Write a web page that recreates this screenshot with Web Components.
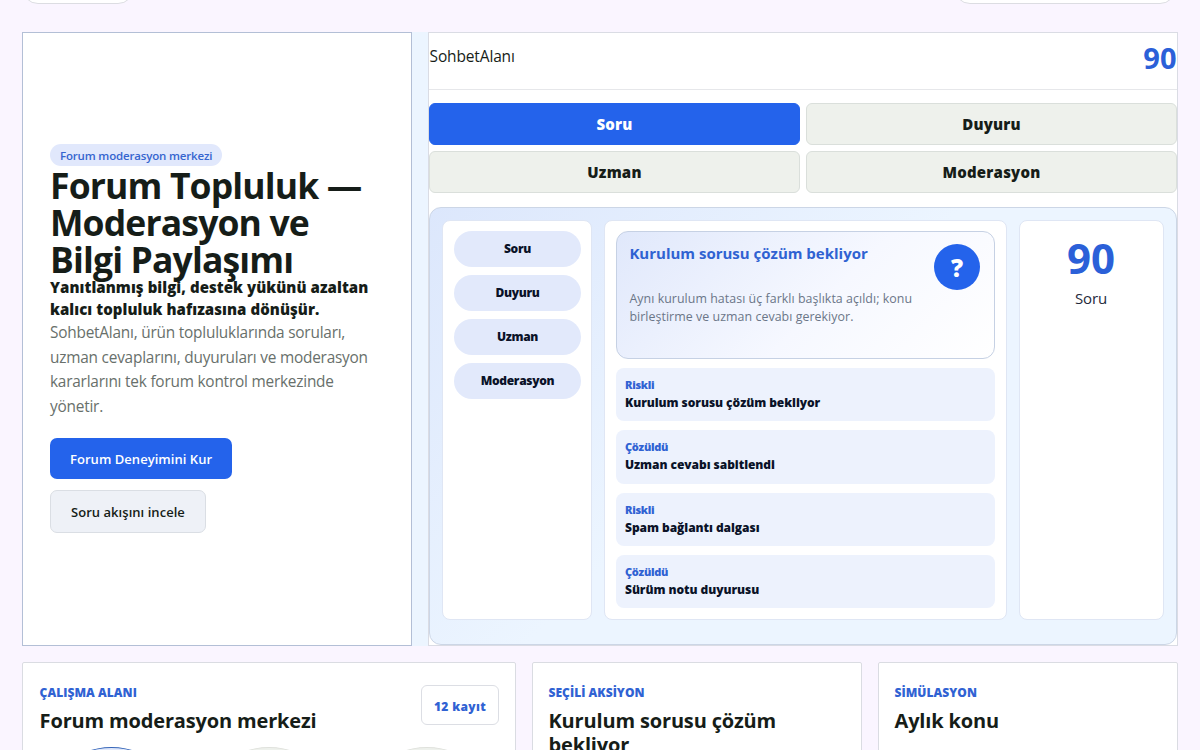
<!DOCTYPE html>
<html lang="tr">
<head>
<meta charset="utf-8">
<title>SohbetAlanı</title>
<style>
  body {
    margin: 0;
    height: 750px;
    overflow: hidden;
    background: #faf5ff;
    color: #161d18;
    font-family: "Open Sans", "Noto Sans", sans-serif;
    font-size: 15px;
  }
</style>
</head>
<body>
<forum-page></forum-page>

<script>
class ForumTop extends HTMLElement {
  constructor() {
    super();
    this.attachShadow({ mode: 'open' });
    this.shadowRoot.innerHTML = `
      <style>
        :host {
          display: flex;
          justify-content: space-between;
          height: 4px;
          padding: 0 24px 0 22px;
          overflow: hidden;
          align-items: flex-end;
        }
        div {
          flex: none;
          box-sizing: border-box;
          height: 42px;
          border: 1px solid #dcdde2;
          border-radius: 16px;
          background: #fff;
        }
        .marka { width: 112px; }
        .menu { width: 222px; }
      </style>
      <div class="marka"></div>
      <div class="menu"></div>
    `;
  }
}
customElements.define('forum-top', ForumTop);

class ForumIntro extends HTMLElement {
  constructor() {
    super();
    this.attachShadow({ mode: 'open' });
    this.shadowRoot.innerHTML = `
      <style>
        :host {
          box-sizing: border-box;
          display: flex;
          flex-direction: column;
          align-items: flex-start;
          justify-content: center;
          padding: 0 27px 1px;
          border: 1px solid #b3bfd6;
          background: #fff;
        }
        .etiket {
          height: 22px;
          padding: 0 10px;
          border-radius: 11px;
          background: #e1e8fc;
          color: #3565cf;
          font-size: 11.5px;
          font-weight: 600;
          line-height: 23px;
          letter-spacing: -0.17px;
          white-space: nowrap;
        }
        h1 {
          margin: 0;
          font-size: 35.5px;
          line-height: 37px;
          letter-spacing: -0.85px;
          white-space: nowrap;
          position: relative;
          top: 1px;
        }
        strong {
          font-weight: 800;
          line-height: 22px;
          letter-spacing: 0.06px;
          white-space: nowrap;
          position: relative;
          top: -1px;
        }
        p {
          margin: 0 0 18.6px;
          color: #68706b;
          font-size: 15.4px;
          line-height: 24.6px;
          letter-spacing: -0.22px;
          white-space: nowrap;
        }
        .btn {
          box-sizing: border-box;
          border-radius: 7px;
          font-size: 13px;
          font-weight: 600;
          letter-spacing: 0.04px;
          white-space: nowrap;
        }
        .ana {
          height: 41px;
          margin-bottom: 11px;
          padding: 0 20px;
          background: #2463eb;
          color: #fff;
          line-height: 42px;
        }
        .ikinci {
          height: 43px;
          padding: 0 20px;
          border: 1px solid #dadee4;
          background: #eef1f7;
          line-height: 42px;
        }
      </style>
      <span class="etiket">Forum moderasyon merkezi</span>
      <h1>Forum Topluluk —<br>Moderasyon ve<br>Bilgi Paylaşımı</h1>
      <strong>Yanıtlanmış bilgi, destek yükünü azaltan<br>kalıcı topluluk hafızasına dönüşür.</strong>
      <p>SohbetAlanı, ürün topluluklarında soruları,<br>uzman cevaplarını, duyuruları ve moderasyon<br>kararlarını tek forum kontrol merkezinde<br>yönetir.</p>
      <div class="btn ana">Forum Deneyimini Kur</div>
      <div class="btn ikinci">Soru akışını incele</div>
    `;
  }
}
customElements.define('forum-intro', ForumIntro);

class ForumTab extends HTMLElement {
  constructor() {
    super();
    this.attachShadow({ mode: 'open' });
    this.shadowRoot.innerHTML = `
      <style>
        :host {
          box-sizing: border-box;
          display: block;
          height: 42px;
          border: 1px solid #dadfdb;
          border-radius: 6px;
          background: #eef1ec;
          font-size: 15px;
          font-weight: 800;
          line-height: 40px;
          letter-spacing: 0.2px;
          text-align: center;
        }
        :host([aktif]) {
          border-color: #2463eb;
          background: #2463eb;
          color: #fff;
        }
      </style>
      <slot></slot>
    `;
  }
}
customElements.define('forum-tab', ForumTab);

class ForumTopic extends HTMLElement {
  constructor() {
    super();
    this.attachShadow({ mode: 'open' });
    this.shadowRoot.innerHTML = `
      <style>
        :host {
          box-sizing: border-box;
          display: block;
          height: 53.3px;
          padding: 8px 9px 0;
          border-radius: 8px;
          background: #edf2fd;
          color: #0a1228;
          font-size: 12px;
          font-weight: 800;
          line-height: 18px;
          letter-spacing: -0.05px;
        }
        b {
          display: block;
          color: #3062d3;
          font-size: 11px;
          font-weight: 800;
          letter-spacing: -0.28px;
        }
      </style>
      <b>${this.getAttribute('durum')}</b>
      <slot></slot>
    `;
  }
}
customElements.define('forum-topic', ForumTopic);

class ForumFeature extends HTMLElement {
  constructor() {
    super();
    this.attachShadow({ mode: 'open' });
    this.shadowRoot.innerHTML = `
      <style>
        :host {
          box-sizing: border-box;
          display: flex;
          justify-content: space-between;
          height: 128px;
          padding: 12px 14px 0 12.4px;
          border: 1px solid #c6d1e4;
          border-radius: 12px;
          background: linear-gradient(135deg, #e0e8fb, #f6f8ff 55%, #fff);
        }
        h3 {
          margin: -1px 0 27px;
          color: #2f62d2;
          font-size: 15px;
          line-height: 20px;
        }
        p {
          margin: 0;
          color: #6b7688;
          font-size: 12.4px;
          line-height: 18px;
          letter-spacing: 0.05px;
          white-space: nowrap;
        }
        .rozet {
          width: 46px;
          height: 46px;
          border-radius: 50%;
          background: #2463eb;
          color: #fff;
          font-size: 24px;
          font-weight: 800;
          line-height: 47px;
          text-align: center;
        }
      </style>
      <div>
        <h3>Kurulum sorusu çözüm bekliyor</h3>
        <p>Aynı kurulum hatası üç farklı başlıkta açıldı; konu<br>birleştirme ve uzman cevabı gerekiyor.</p>
      </div>
      <div class="rozet">?</div>
    `;
  }
}
customElements.define('forum-feature', ForumFeature);

class ForumBoard extends HTMLElement {
  constructor() {
    super();
    this.attachShadow({ mode: 'open' });
    this.shadowRoot.innerHTML = `
      <style>
        :host {
          box-sizing: border-box;
          display: flex;
          flex-direction: column;
          border: 1px solid #dadce4;
          background: #fff;
        }
        header {
          display: flex;
          justify-content: space-between;
          box-sizing: border-box;
          height: 57px;
          border-bottom: 1px solid #e6e7ea;
        }
        header span {
          padding-left: 0.6px;
          font-size: 15.5px;
          line-height: 47px;
          letter-spacing: -0.15px;
        }
        header b {
          color: #2b60d8;
          font-size: 29px;
          line-height: 49px;
          letter-spacing: 0.3px;
        }
        .sekmeler {
          display: grid;
          grid-template-columns: 1fr 1fr;
          gap: 6px;
          margin: 13px 0 14px;
        }
        .pano {
          flex: 1;
          box-sizing: border-box;
          display: grid;
          grid-template-columns: 150px 403px 145px;
          grid-template-rows: 400px;
          gap: 12px;
          padding: 12px;
          border: 1px solid #ccd6e6;
          border-radius: 12px;
          background: linear-gradient(135deg, #dce7fc, #ecf5ff 45%, #ecf5ff);
        }
        .kolon {
          box-sizing: border-box;
          display: flex;
          flex-direction: column;
          padding: 10px;
          border: 1px solid #dfe6f4;
          border-radius: 8px;
          background: #fff;
        }
        .liste { gap: 8.5px; padding-left: 11px; }
        .liste span {
          height: 35.5px;
          border-radius: 18px;
          background: #e2e9fb;
          color: #0a1228;
          font-size: 12px;
          font-weight: 800;
          line-height: 36px;
          letter-spacing: -0.3px;
          text-align: center;
        }
        .akis { gap: 9px; padding-left: 11px; padding-right: 11px; }
        .sayi {
          align-items: center;
          color: #1e293b;
          letter-spacing: -0.1px;
        }
        .sayi b {
          color: #2b60d8;
          font-size: 42px;
          line-height: 54px;
          padding-right: 1px;
        }
        .sayi span { padding-right: 1px; line-height: 26px; }
      </style>
      <header><span>SohbetAlanı</span><b>90</b></header>
      <div class="sekmeler">
        <forum-tab aktif>Soru</forum-tab>
        <forum-tab>Duyuru</forum-tab>
        <forum-tab>Uzman</forum-tab>
        <forum-tab>Moderasyon</forum-tab>
      </div>
      <div class="pano">
        <div class="kolon liste">
          <span>Soru</span><span>Duyuru</span><span>Uzman</span><span>Moderasyon</span>
        </div>
        <div class="kolon akis">
          <forum-feature></forum-feature>
          <forum-topic durum="Riskli">Kurulum sorusu çözüm bekliyor</forum-topic>
          <forum-topic durum="Çözüldü">Uzman cevabı sabitlendi</forum-topic>
          <forum-topic durum="Riskli">Spam bağlantı dalgası</forum-topic>
          <forum-topic durum="Çözüldü">Sürüm notu duyurusu</forum-topic>
        </div>
        <div class="kolon sayi"><b>90</b><span>Soru</span></div>
      </div>
    `;
  }
}
customElements.define('forum-board', ForumBoard);

class ForumCard extends HTMLElement {
  constructor() {
    super();
    this.attachShadow({ mode: 'open' });
    this.shadowRoot.innerHTML = `
      <style>
        :host {
          box-sizing: border-box;
          display: block;
          height: 300px;
          padding: 20px 16px 0 var(--sol, 15.5px);
          border: 1px solid #dadce2;
          border-radius: 2px;
          background: #fff;
        }
        .ust { display: flex; justify-content: space-between; }
        small {
          display: block;
          color: #3062d3;
          font-size: 12px;
          font-weight: 800;
          line-height: 20px;
          letter-spacing: 0.05px;
        }
        h2 {
          margin: 6px 0 0;
          font-size: 20px;
          line-height: 24px;
          letter-spacing: -0.16px;
        }
      </style>
      <div class="ust">
        <div>
          <small>${this.getAttribute('baslik')}</small>
          <h2><slot></slot></h2>
        </div>
        <slot name="sag"></slot>
      </div>
      <slot name="alt"></slot>
    `;
  }
}
customElements.define('forum-card', ForumCard);

class ForumPage extends HTMLElement {
  constructor() {
    super();
    this.attachShadow({ mode: 'open' });
    this.shadowRoot.innerHTML = `
      <style>
        :host { display: block; }
        .giris {
          display: grid;
          grid-template-columns: 390px 750px;
          gap: 16px;
          height: 614px;
          margin: 28px 22px 16px;
          background: #ecf5ff;
        }
        .kartlar {
          display: grid;
          grid-template-columns: 494px 330px 300px;
          gap: 16px;
          height: 88px;
          margin: 0 22px;
          overflow: hidden;
        }
        .genis { --sol: 16.6px; }
        .kayit {
          box-sizing: border-box;
          width: 78px;
          height: 40px;
          margin: 2px 0 0;
          border: 1px solid #dcdee4;
          border-radius: 6px;
          color: #3062d3;
          font-size: 12px;
          font-weight: 800;
          line-height: 41px;
          letter-spacing: 0.34px;
          text-align: center;
        }
        .halkalar {
          display: grid;
          grid-template-columns: repeat(3, 1fr);
          gap: 14px;
          margin: 14px 0 0;
        }
        .halkalar i {
          box-sizing: border-box;
          height: 144px;
          border: 1px solid #dfe1dc;
          border-radius: 50%;
          background: #eef1ec;
        }
        .halkalar i:first-child { border-color: #3565b8; background: #e1e9fb; }
      </style>
      <forum-top></forum-top>
      <div class="giris">
        <forum-intro></forum-intro>
        <forum-board></forum-board>
      </div>
      <div class="kartlar">
        <forum-card class="genis" baslik="ÇALIŞMA ALANI">Forum moderasyon merkezi
          <div class="kayit" slot="sag">12 kayıt</div>
          <div class="halkalar" slot="alt"><i></i><i></i><i></i></div>
        </forum-card>
        <forum-card baslik="SEÇİLİ AKSİYON">Kurulum sorusu çözüm<br>bekliyor</forum-card>
        <forum-card baslik="SİMÜLASYON">Aylık konu</forum-card>
      </div>
    `;
  }
}
customElements.define('forum-page', ForumPage);
</script>
</body>
</html>
